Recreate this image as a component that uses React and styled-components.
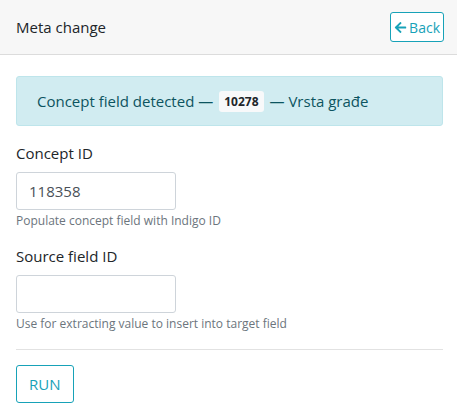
import React from "react";
import styled, { createGlobalStyle } from "styled-components";

const Global = createGlobalStyle`
  body {
    margin: 0;
    background: #fff;
    font-family: "Open Sans", "Noto Sans", sans-serif;
    color: #212529;
  }
  * { box-sizing: border-box; }
`;

const Header = styled.div`
  display: flex;
  justify-content: space-between;
  align-items: center;
  height: 55px;
  padding: 0 13px 0 16px;
  background: #f7f7f7;
  border-bottom: 1px solid #dcdcdc;
  font-size: 15px;
`;

const OutlineButton = styled.button`
  display: flex;
  align-items: center;
  gap: 2px;
  height: ${(p) => p.$h || 30}px;
  padding: 0 ${(p) => p.$px || 3}px;
  background: #fff;
  border: 1px solid #17a2b8;
  border-radius: 3px;
  color: #17a2b8;
  font-family: inherit;
  font-size: ${(p) => p.$fs || 14}px;
`;

const Body = styled.div`
  padding: 21px 14px 0 16px;
`;

const Alert = styled.div`
  display: flex;
  align-items: center;
  height: 50px;
  padding: 0 20px;
  background: #d1ecf1;
  border: 1px solid #bee5eb;
  border-radius: 3px;
  color: #0c5460;
  font-size: 15px;
  margin-bottom: 17px;
`;

const Badge = styled.span`
  display: inline-block;
  margin: 0 6px;
  padding: 2px 5px;
  background: #f8f9fa;
  border-radius: 3px;
  color: #212529;
  font-size: 12px;
  font-weight: 700;
`;

const Group = styled.div`
  display: flex;
  flex-direction: column;
  margin-bottom: 17px;
`;

const Label = styled.label`
  font-size: 15px;
  margin-bottom: 9px;
`;

const Input = styled.input`
  width: 160px;
  height: 38px;
  padding: 0 12px;
  border: 1px solid #ced4da;
  border-radius: 3px;
  font-family: inherit;
  font-size: 15px;
  color: #495057;
  outline: none;
`;

const Help = styled.small`
  margin-top: 2px;
  font-size: 12px;
  color: #6c757d;
`;

const Rule = styled.hr`
  margin: 0 0 15px;
  border: 0;
  border-top: 1px solid #e2e2e2;
`;

export default function App() {
  return (
    <>
      <Global />
      <Header>
        <span>Meta change</span>
        <OutlineButton>
          <svg width="13" height="13" viewBox="0 0 448 512" fill="currentColor">
            <path d="M257.5 445.1l-22.2 22.2c-9.4 9.4-24.6 9.4-33.9 0L7 273c-9.4-9.4-9.4-24.6 0-33.9L201.4 44.7c9.4-9.4 24.6-9.4 33.9 0l22.2 22.2c9.5 9.5 9.3 25-.4 34.3L136.6 216H424c13.3 0 24 10.7 24 24v32c0 13.3-10.7 24-24 24H136.6l120.5 114.8c9.8 9.3 10 24.8.4 34.3z" />
          </svg>
          Back
        </OutlineButton>
      </Header>
      <Body>
        <Alert>
          Concept field detected —<Badge>10278</Badge>— Vrsta građe
        </Alert>
        <Group>
          <Label>Concept ID</Label>
          <Input defaultValue="118358" />
          <Help>Populate concept field with Indigo ID</Help>
        </Group>
        <Group>
          <Label>Source field ID</Label>
          <Input />
          <Help>Use for extracting value to insert into target field</Help>
        </Group>
        <Rule />
        <OutlineButton $h={38} $px={12} $fs={15}>RUN</OutlineButton>
      </Body>
    </>
  );
}
